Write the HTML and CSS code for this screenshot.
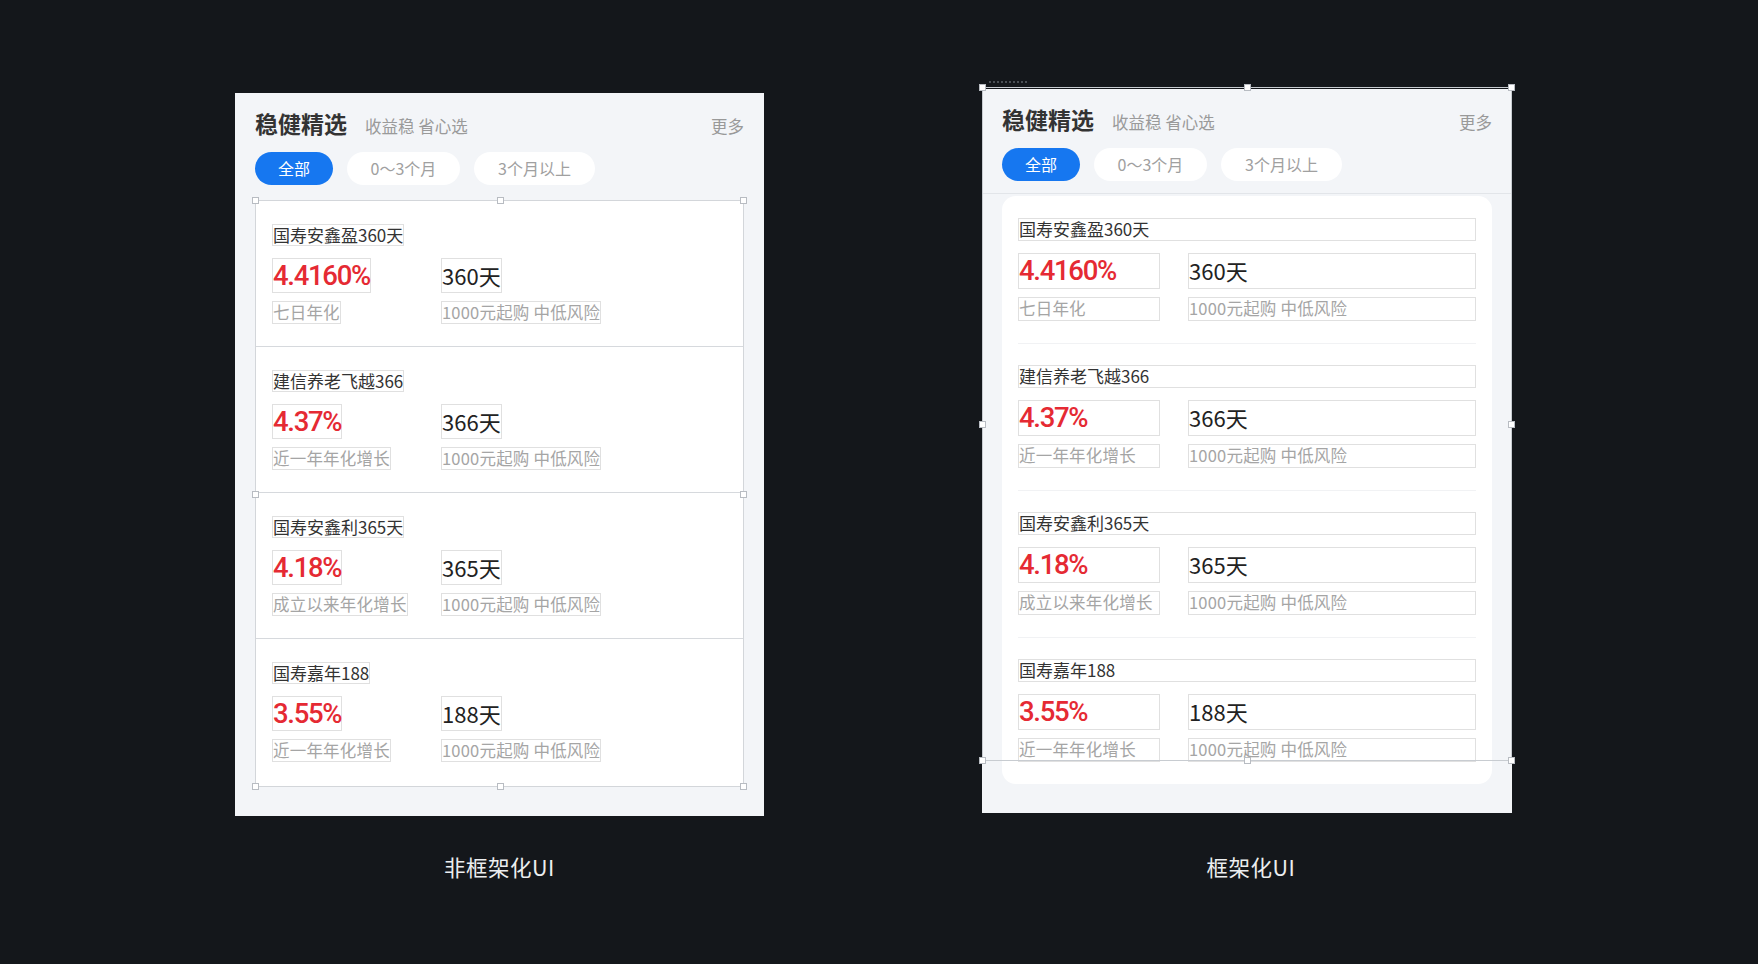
FILE: index.html
```html
<!DOCTYPE html>
<html lang="zh-CN">
<head>
<meta charset="utf-8">
<title>框架化UI</title>
<link rel="stylesheet" href="styles.css">
</head>
<body>
<div class="stage">
  <div class="col col-left">
    <div class="panel">
      <div class="head">
        <div class="title-row">
          <span class="title">稳健精选</span>
          <span class="subtitle">收益稳 省心选</span>
          <span class="more">更多</span>
        </div>
        <div class="tabs">
          <span class="tab active">全部</span>
          <span class="tab">0～3个月</span>
          <span class="tab">3个月以上</span>
        </div>
      </div>
      <div class="list">
        <div class="item">
          <span class="box name">国寿安鑫盈360天</span>
          <span class="box rate">4.4160%</span>
          <span class="box days">360天</span>
          <span class="box sub">七日年化</span>
          <span class="box sub">1000元起购 中低风险</span>
        </div>
        <div class="item">
          <span class="box name">建信养老飞越366</span>
          <span class="box rate">4.37%</span>
          <span class="box days">366天</span>
          <span class="box sub">近一年年化增长</span>
          <span class="box sub">1000元起购 中低风险</span>
        </div>
        <div class="item">
          <span class="box name">国寿安鑫利365天</span>
          <span class="box rate">4.18%</span>
          <span class="box days">365天</span>
          <span class="box sub">成立以来年化增长</span>
          <span class="box sub">1000元起购 中低风险</span>
        </div>
        <div class="item item-last">
          <span class="box name">国寿嘉年188</span>
          <span class="box rate">3.55%</span>
          <span class="box days">188天</span>
          <span class="box sub">近一年年化增长</span>
          <span class="box sub">1000元起购 中低风险</span>
        </div>
        <i class="h h-tl"></i><i class="h h-tm"></i><i class="h h-tr"></i>
        <i class="h h-ml"></i><i class="h h-mr"></i>
        <i class="h h-bl"></i><i class="h h-bm"></i><i class="h h-br"></i>
      </div>
    </div>
    <div class="caption caption-left">非框架化UI</div>
  </div>

  <div class="col col-right">
    <div class="panel panel-framed">
      <div class="head head-framed">
        <div class="title-row">
          <span class="title">稳健精选</span>
          <span class="subtitle">收益稳 省心选</span>
          <span class="more">更多</span>
        </div>
        <div class="tabs">
          <span class="tab active">全部</span>
          <span class="tab">0～3个月</span>
          <span class="tab">3个月以上</span>
        </div>
      </div>
      <div class="card">
        <div class="item">
          <span class="box name">国寿安鑫盈360天</span>
          <span class="box rate">4.4160%</span>
          <span class="box days">360天</span>
          <span class="box sub">七日年化</span>
          <span class="box sub">1000元起购 中低风险</span>
        </div>
        <div class="item">
          <span class="box name">建信养老飞越366</span>
          <span class="box rate">4.37%</span>
          <span class="box days">366天</span>
          <span class="box sub">近一年年化增长</span>
          <span class="box sub">1000元起购 中低风险</span>
        </div>
        <div class="item">
          <span class="box name">国寿安鑫利365天</span>
          <span class="box rate">4.18%</span>
          <span class="box days">365天</span>
          <span class="box sub">成立以来年化增长</span>
          <span class="box sub">1000元起购 中低风险</span>
        </div>
        <div class="item">
          <span class="box name">国寿嘉年188</span>
          <span class="box rate">3.55%</span>
          <span class="box days">188天</span>
          <span class="box sub">近一年年化增长</span>
          <span class="box sub">1000元起购 中低风险</span>
        </div>
      </div>
      <div class="selection">
        <i class="sel-tag"></i>
        <i class="h h-tl"></i><i class="h h-tm"></i><i class="h h-tr"></i>
        <i class="h h-ml"></i><i class="h h-mr"></i>
        <i class="h h-bl"></i><i class="h h-bm"></i><i class="h h-br"></i>
      </div>
    </div>
    <div class="caption caption-right">框架化UI</div>
  </div>
</div>
</body>
</html>
```
FILE: styles.css
```css
* { box-sizing: border-box; }
html, body { margin: 0; padding: 0; }
body {
  width: 1758px;
  height: 964px;
  overflow: hidden;
  background: #14171b;
  font-family: "Noto Sans CJK SC", "Noto Sans", sans-serif;
  color: #333;
}
.stage {
  display: flex;
  align-items: flex-start;
  padding-left: 235px;
}
.col { display: flex; flex-direction: column; align-items: center; }
.col-left { width: 529px; padding-top: 93px; }
.col-right { width: 530px; margin-left: 218px; padding-top: 89px; }

.panel {
  position: relative;
  width: 100%;
  background: #f3f5f8;
  padding: 0 20px;
}
.col-left .panel { height: 723px; }
.col-right .panel { height: 724px; }

.head { padding-top: 15px; }
.title-row {
  display: flex;
  align-items: baseline;
  height: 30px;
}
.title {
  font-size: 23px;
  font-weight: 700;
  color: #333;
  line-height: 30px;
}
.subtitle {
  font-size: 16.5px;
  color: #9a9a9a;
  margin-left: 18px;
}
.more {
  margin-left: auto;
  font-size: 16.5px;
  color: #999;
}
.tabs {
  display: flex;
  gap: 14px;
  margin-top: 14px;
}
.tab {
  height: 33px;
  line-height: 33px;
  border-radius: 17px;
  background: #fff;
  color: #a0a0a0;
  font-size: 16px;
  padding: 0 10px;
  text-align: center;
}
.tab:nth-child(1) { width: 78px; }
.tab:nth-child(2) { width: 113px; }
.tab:nth-child(3) { width: 121px; }
.tab.active { background: #1677f0; color: #fff; }

/* left: unframed list */
.list {
  position: relative;
  margin-top: 15px;
  background: #fff;
  border: 1px solid #d3d6da;
}
.item {
  display: grid;
  grid-template-columns: 169px 1fr;
  grid-template-rows: 22px 47px 31px;
  align-items: start;
  justify-items: start;
  padding: 23px 16px 22px;
}
.list .item + .item { border-top: 1px solid #d6d9dd; }
.list .item-last { padding-bottom: 24px; }
.box {
  border: 1px solid #e0e0e0;
  white-space: nowrap;
}
.name {
  grid-column: 1 / 3;
  font-size: 17px;
  line-height: 20px;
  color: #333;
}
.rate, .days { margin-top: 12px; height: 35px; }
.sub { margin-top: 8px; }
.rate {
  font-family: Roboto, "Noto Sans", sans-serif;
  font-weight: 500;
  font-size: 27.5px;
  letter-spacing: -1.3px;
  line-height: 33px;
  color: #e52a33;
}
.days {
  font-size: 22px;
  line-height: 33px;
  color: #222;
}
.sub {
  font-size: 16.5px;
  letter-spacing: 0.2px;
  line-height: 21px;
  color: #a5a5a5;
}

/* right: framed */
.head-framed {
  margin: 0 -20px;
  padding: 15px 20px 12px;
  border-bottom: 1px solid #e2e5e9;
}
.card {
  margin-top: 2px;
  background: #fff;
  border-radius: 14px;
  padding: 0 16px;
}
.card .item {
  grid-template-columns: 142px 1fr;
  grid-template-rows: 23px 48px 32px;
  column-gap: 28px;
  justify-items: stretch;
  padding: 21px 0 22px;
}
.card .item:first-child { padding-top: 22px; }
.card .item + .item { border-top: 1px solid #f1f2f4; }
.card .name { height: 23px; }
.card .rate, .card .days { height: 36px; }
.card .sub { height: 24px; }

/* selection handles */
.h {
  position: absolute;
  width: 7px;
  height: 7px;
  background: #fff;
  border: 1px solid #b8bcc2;
}
.h-tl { left: -4px; top: -4px; }
.h-tm { left: calc(50% - 3px); top: -4px; }
.h-tr { right: -4px; top: -4px; }
.h-ml { left: -4px; top: calc(50% - 3px); }
.h-mr { right: -4px; top: calc(50% - 3px); }
.h-bl { left: -4px; bottom: -4px; }
.h-bm { left: calc(50% - 3px); bottom: -4px; }
.h-br { right: -4px; bottom: -4px; }

.selection {
  position: absolute;
  left: 0;
  right: 0;
  top: -2px;
  height: 674px;
  border: 1px solid #c8ccd1;
  pointer-events: none;
}
.sel-tag {
  position: absolute;
  left: 6px;
  top: -7px;
  width: 38px;
  height: 2px;
  border-top: 2px dotted #4a4f55;
}

.caption {
  color: #eceef0;
  font-size: 21.5px;
  line-height: 24px;
  letter-spacing: 0.5px;
}
.caption-left { margin-top: 39px; }
.caption-right { margin-top: 42px; margin-left: 8px; }
```
